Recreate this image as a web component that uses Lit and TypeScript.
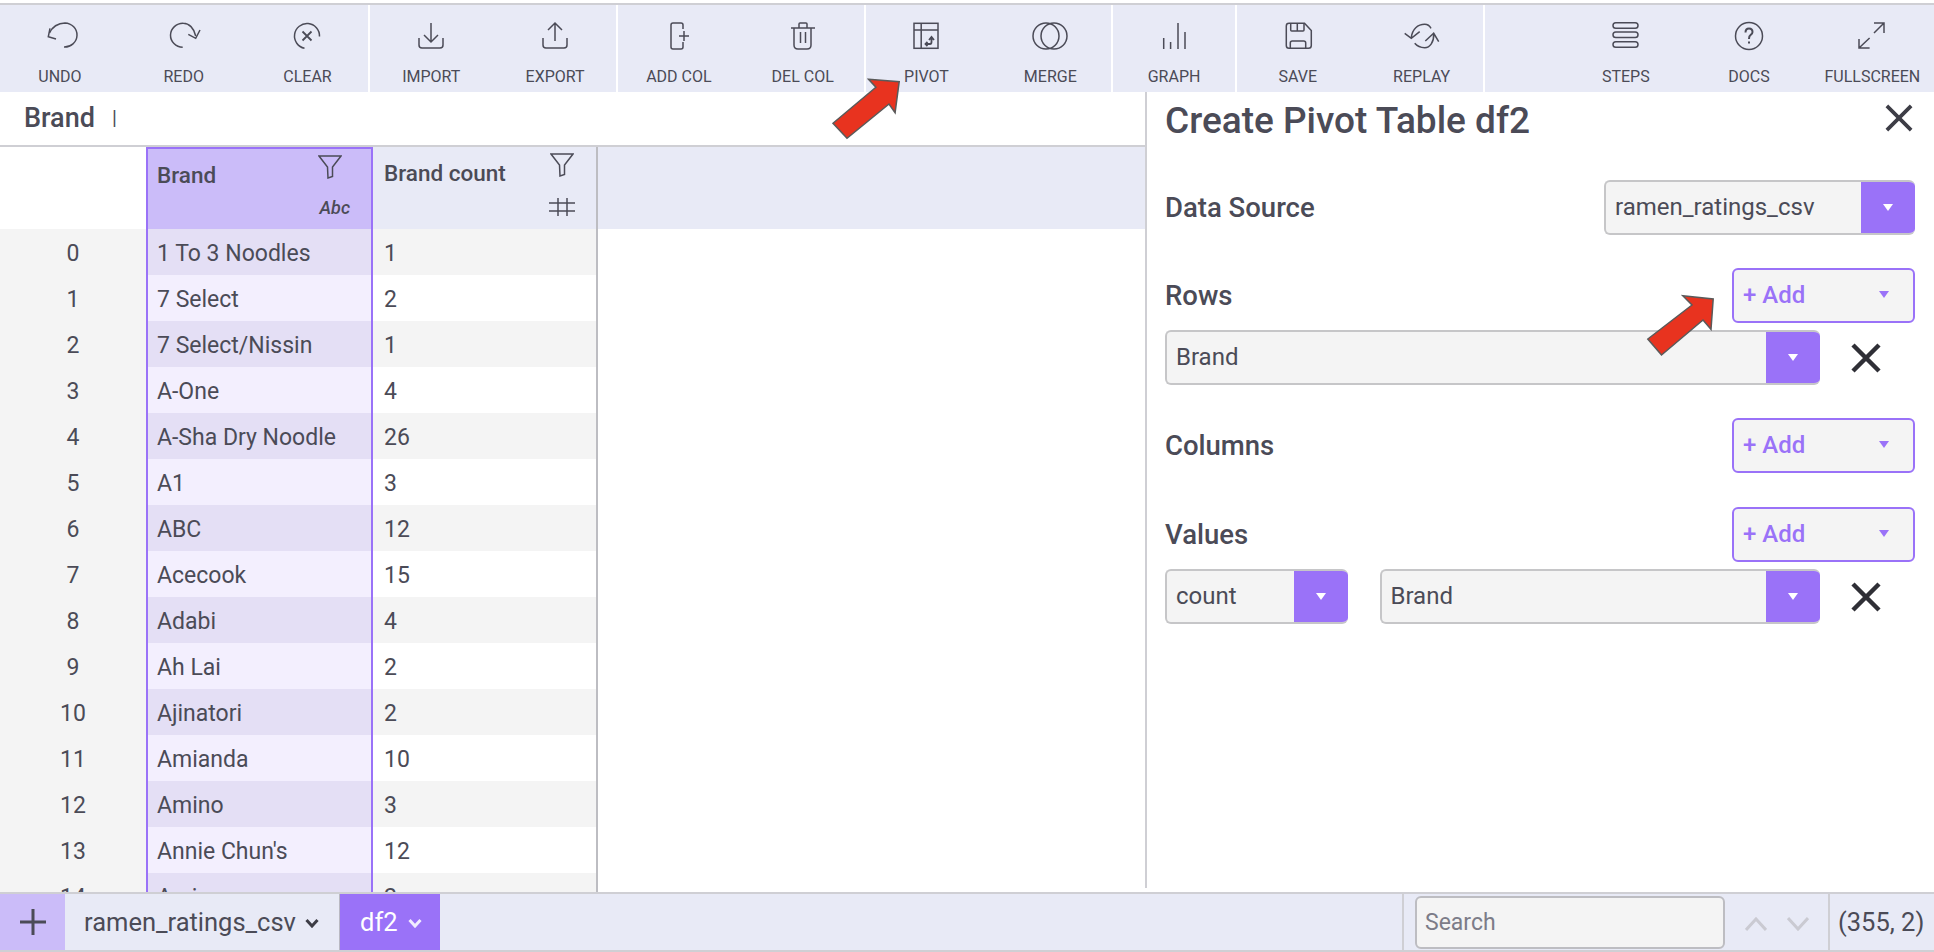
import { LitElement, html, css, svg } from 'lit';
import { customElement } from 'lit/decorators.js';

const icons: Record<string, unknown> = {
  undo: svg`<path d="M7.500 15C10 9 16 5 23 5A12.500 12 0 0 1 22 29"/><path d="M8 10.300L6.300 18.700L14 21"/>`,
  redo: svg`<path d="M16.700 29.300A12.500 12 0 0 1 17.300 5.300C23 5.300 28 10 29.700 18"/><path d="M22.300 16.300L29.700 20.300L34 12"/>`,
  clear: svg`<path d="M15.500 30.300A12.500 12.500 0 1 1 30.500 18.500"/><path d="M13.500 13.500L22.500 22.500M22.500 13.500L13.500 22.500" stroke-width="1.800"/>`,
  import: svg`<path d="M18 5V24M11 17L18 24L25 17"/><path d="M6 20V27Q6 30 9 30H27Q30 30 30 27V20"/>`,
  export: svg`<path d="M18 5V23M11 12L18 5L25 12"/><path d="M6 20V27Q6 30 9 30H27Q30 30 30 27V20"/>`,
  addcol: svg`<path d="M22 11V7Q22 5 20 5H12Q10 5 10 7V29Q10 31 12 31H20Q22 31 22 29V24"/><path d="M23 13V23M18 18H28"/>`,
  delcol: svg`<path d="M6 10H30M14 10V6Q14 5 15 5H21Q22 5 22 6V10"/><path d="M9 10V27Q9 31 13 31H22Q26 31 26 27V10M15.500 14V25M20.500 14V25"/>`,
  pivot: svg`<rect x="6" y="5.300" width="24" height="25"/><path d="M6 12H30M13.200 5.300V30.300"/><path d="M17.500 26H22Q23.500 26 23.500 24V20M21 22L23.500 19L26 22M19.500 24L17.500 26L19.500 28" stroke-width="1.800"/>`,
  merge: svg`<circle cx="14" cy="18" r="13"/><circle cx="22" cy="18" r="13"/>`,
  graph: svg`<path d="M7.700 20V31M14.600 24V31M22 5V31M29 14V31"/>`,
  save: svg`<path d="M6.300 8Q6.300 5.300 9 5.300H24.500L31.300 12.500V27.500Q31.300 30.300 28.500 30.300H9Q6.300 30.300 6.300 27.500Z"/><path d="M10.700 5.300V12Q10.700 13 11.700 13H23Q24 13 24 12V5.300M17.300 5.300V13M10.300 30.300V25Q10.300 23 12.300 23H23.700Q25.700 23 25.700 25V30.300"/>`,
  replay: svg`<path d="M7.300 20C8 11 14 6.300 20.700 6.300C23 6.300 25.500 7.500 27 10.300M0.700 15.300L7.300 20.300L15.700 13.700"/><path d="M29.700 16C30 24 26 29.700 20.700 29.700C17 29.700 13 28 10.700 25.300M21.300 23L29.700 15.300L34.700 23.700"/>`,
  steps: svg`<rect x="5" y="4.700" width="25" height="5.500" rx="2.750"/><rect x="5" y="14" width="25" height="5.500" rx="2.750"/><rect x="5" y="23.700" width="25" height="5.500" rx="2.750"/>`,
  docs: svg`<circle cx="18" cy="18" r="13.500"/><path d="M14.500 14.500Q14.500 10.500 18 10.500Q21.500 10.500 21.500 14Q21.500 16 19.500 17Q18 18 18 21M18 23.500V25.500" stroke-width="2"/>`,
  fullscreen: svg`<path d="M30 5L20 15M20 5H30V15M5 30L15.600 20M5 21V30H15.600"/>`,
};

const toolGroups = [
  { tools: [['UNDO', 'undo'], ['REDO', 'redo'], ['CLEAR', 'clear']] },
  { tools: [['IMPORT', 'import'], ['EXPORT', 'export']] },
  { tools: [['ADD COL', 'addcol'], ['DEL COL', 'delcol']] },
  { tools: [['PIVOT', 'pivot'], ['MERGE', 'merge']] },
  { tools: [['GRAPH', 'graph']] },
  { tools: [['SAVE', 'save'], ['REPLAY', 'replay']] },
];
const rightTools = [['STEPS', 'steps'], ['DOCS', 'docs'], ['FULLSCREEN', 'fullscreen']];

const rows: [string, string][] = [
  ['1 To 3 Noodles', '1'],
  ['7 Select', '2'],
  ['7 Select/Nissin', '1'],
  ['A-One', '4'],
  ['A-Sha Dry Noodle', '26'],
  ['A1', '3'],
  ['ABC', '12'],
  ['Acecook', '15'],
  ['Adabi', '4'],
  ['Ah Lai', '2'],
  ['Ajinatori', '2'],
  ['Amianda', '10'],
  ['Amino', '3'],
  ["Annie Chun's", '12'],
  ['Arai', '2'],
];

const funnel = html`<svg class="funnel" viewBox="0 0 24 24"><path d="M1 1H23L14.500 12V21.500L10 23L9.500 12Z"/></svg>`;
const cross = (cls: string) => html`<svg class=${cls} viewBox="0 0 30 30"><path d="M2 2L28 28M28 2L2 28"/></svg>`;

@customElement('app-root')
export class AppRoot extends LitElement {
  static styles = css`
    :host {
      display: block;
      height: 952px;
      overflow: hidden;
      background: #fff;
      font-family: Roboto, "Liberation Sans", sans-serif;
      color: #4b4b57;
    }

    .app {
      display: flex;
      flex-direction: column;
      height: 952px;
      padding-top: 3px;
      box-sizing: border-box;
      position: relative;
    }

    .toolbar {
      display: flex;
      flex: none;
      height: 87px;
      margin-left: -2px;
      border-top: 2px solid #cfcfd4;
      background: #e8eaf6;
    }
    .group {
      display: flex;
      box-shadow: 1px 0 0 #fff, inset -1px 0 0 #fff;
    }
    .right {
      margin-left: auto;
      box-shadow: none;
    }
    .tool {
      width: 123.800px;
      display: flex;
      flex-direction: column;
      align-items: center;
      padding-top: 13px;
      box-sizing: border-box;
    }
    .right .tool {
      width: 123.300px;
    }
    .tool svg {
      width: 36px;
      height: 36px;
      fill: none;
      stroke: #4b4b57;
      stroke-width: 1.500;
      overflow: visible;
    }
    .tool span {
      margin-top: 13px;
      font-size: 16px;
      line-height: 20px;
    }

    .main {
      display: flex;
      flex: none;
      height: 800px;
    }
    .left {
      width: 1145px;
      flex: none;
      display: flex;
      flex-direction: column;
      overflow: hidden;
    }
    .formula {
      flex: none;
      height: 51px;
      padding: 0 0 2px 24px;
      border-bottom: 2px solid #cfcfd4;
      display: flex;
      align-items: center;
      font-size: 27px;
      font-weight: 500;
    }
    .caret {
      margin-left: 17px;
      font-size: 20px;
      font-weight: 400;
    }

    .table {
      display: grid;
      grid-template-columns: 146px 227px 225px 1fr;
      grid-auto-rows: 46px;
      grid-template-rows: 82px;
      flex: 1;
      overflow: hidden;
      font-size: 23px;
    }
    .corner {
      background: #fff;
    }
    .head {
      background: #e8eaf6;
      box-sizing: border-box;
      position: relative;
      padding: 13px 0 0 9px;
      font-size: 22.500px;
      font-weight: 500;
    }
    .head.sel {
      background: #cbbcf9;
      border: solid #9a72f8;
      border-width: 2px 2px 0;
    }
    .head.count {
      border-right: 2px solid #bdbdc2;
      padding-left: 11px;
      padding-top: 13px;
    }
    .head.rest {
      grid-column: 4;
    }
    .head-tools {
      position: absolute;
      right: 22px;
      top: 6px;
      display: flex;
      flex-direction: column;
      align-items: flex-end;
    }
    .head.sel .head-tools {
      right: 29px;
    }
    .funnel {
      width: 24px;
      height: 24px;
      fill: none;
      stroke: #4b4b57;
      stroke-width: 1.500;
    }
    .abc {
      margin-top: 18px;
      font-size: 18px;
      font-style: italic;
      font-weight: 500;
      margin-right: -8px;
    }
    .hash {
      width: 26px;
      height: 18px;
      margin: 21px -1px 0 0;
      fill: none;
      stroke: #4b4b57;
      stroke-width: 1.500;
    }

    .cell {
      display: flex;
      align-items: center;
      box-sizing: border-box;
      padding-top: 2px;
    }
    .cell.idx {
      background: #f4f4f4;
      justify-content: center;
    }
    .cell.brand {
      border: solid #9a72f8;
      border-width: 0 2px;
      padding-left: 9px;
      background: #f3effe;
    }
    .cell.brand.even {
      background: #e4dff5;
    }
    .cell.num {
      padding-left: 11px;
      border-right: 2px solid #bdbdc2;
      background: #fff;
    }
    .cell.num.even {
      background: #f4f4f4;
    }
    .cell.blank {
      background: #fff;
    }

    .panel {
      flex: 1;
      height: 796px;
      border-left: 2px solid #cfcfd4;
      padding: 0 19px 0 18px;
      box-sizing: border-box;
    }
    .title-row {
      height: 56px;
      display: flex;
      align-items: center;
      justify-content: space-between;
    }
    .title-row h1 {
      margin: 0;
      font-size: 37px;
      font-weight: 500;
    }
    .close {
      width: 28px;
      height: 28px;
      margin: -4px 2px 0 0;
      fill: none;
      stroke: #3d3d46;
      stroke-width: 4;
    }
    .head-row {
      display: flex;
      align-items: center;
      justify-content: space-between;
      height: 55px;
      margin-top: 33px;
      font-size: 27.500px;
      font-weight: 500;
    }
    .head-row.first {
      margin-top: 32px;
    }
    .head-row.values {
      margin-top: 34px;
    }
    .pick-row {
      display: flex;
      align-items: center;
      margin-top: 7px;
      gap: 32px;
    }
    .select {
      display: flex;
      height: 55px;
      box-sizing: border-box;
      border: 2px solid #c6c6c8;
      border-right: 0;
      border-radius: 6px;
      background: #f4f4f4;
      font-size: 24px;
      font-weight: 400;
      overflow: hidden;
    }
    .select .val {
      flex: 1;
      display: flex;
      align-items: center;
      padding: 0 0 1px 9px;
    }
    .select .drop {
      width: 54px;
      margin-top: -2px;
      margin-bottom: -2px;
      background: #9a72f8;
      display: flex;
      align-items: center;
      justify-content: center;
    }
    .tri {
      width: 0;
      height: 0;
      border: solid transparent;
      border-width: 7px 5.500px 0;
      border-top-color: #fff;
    }
    .source {
      width: 311px;
    }
    .wide {
      width: 654.500px;
    }
    .fn {
      width: 182.500px;
    }
    .col {
      width: 440px;
    }
    .remove {
      width: 30px;
      height: 30px;
      margin-left: -1px;
      fill: none;
      stroke: #2f2f36;
      stroke-width: 4.500;
    }
    .add {
      width: 183px;
      height: 55px;
      box-sizing: border-box;
      border: 2px solid #9a72f8;
      border-radius: 6px;
      background: #f4f4f4;
      color: #9a72f8;
      display: flex;
      align-items: center;
      justify-content: space-between;
      padding: 0 24px 2px 9px;
      font-size: 24px;
      font-weight: 500;
    }
    .add .tri {
      border-top-color: #9a72f8;
    }

    .bottom {
      flex: none;
      height: 60px;
      box-sizing: border-box;
      border-top: 2px solid #cfcfd4;
      border-bottom: 2px solid #cfcfd4;
      background: #e8eaf6;
      display: flex;
      align-items: stretch;
      font-size: 25.500px;
    }
    .plus {
      width: 65px;
      background: #cbbcf9;
      display: flex;
      align-items: center;
      justify-content: center;
    }
    .plus svg {
      width: 26px;
      height: 26px;
      stroke: #4b4b57;
      stroke-width: 3;
    }
    .tab {
      display: flex;
      align-items: center;
      box-sizing: border-box;
      width: 275px;
      padding-left: 19px;
      gap: 9px;
      border-right: 1px solid #b9b9c2;
    }
    .tab.active {
      width: 100px;
      padding-left: 20px;
      gap: 10px;
      border: 0;
      background: #9a72f8;
      color: #fff;
    }
    .tab svg {
      width: 14px;
      height: 10px;
      margin-top: 2px;
      fill: none;
      stroke: #3d3d46;
      stroke-width: 3;
    }
    .tab.active svg {
      stroke: #f1ecff;
    }
    .find {
      margin-left: auto;
      width: 426px;
      box-sizing: border-box;
      border-left: 2px solid #cfcfd4;
      padding: 1px 0 0 11px;
      display: flex;
      align-items: flex-start;
    }
    .find input {
      width: 310px;
      height: 53px;
      margin: 1px 0 0;
      padding: 0 0 0 8px;
      box-sizing: border-box;
      border: 2px solid #bdbdc2;
      border-radius: 6px;
      background: #f4f4f4;
      font: 400 23px Roboto, sans-serif;
      outline: none;
    }
    .find input::placeholder {
      color: #7c7c88;
    }
    .find .nav {
      width: 22px;
      height: 14px;
      margin: 22px 0 0 20px;
      fill: none;
      stroke: #cacad2;
      stroke-width: 3;
      flex: none;
    }
    .shape {
      width: 106px;
      flex: none;
      box-sizing: border-box;
      border-left: 2px solid #cfcfd4;
      display: flex;
      align-items: center;
      padding-left: 8px;
      white-space: nowrap;
    }

    .arrows {
      position: absolute;
      left: 0;
      top: 0;
      width: 1934px;
      height: 952px;
      pointer-events: none;
      fill: #e8331f;
      stroke: #5a5a5a;
      stroke-width: 1.500;
    }
  `;

  renderTool(tool: string[]) {
    return html`<div class="tool">
      <svg viewBox="0 0 36 36">${icons[tool[1]]}</svg>
      <span>${tool[0]}</span>
    </div>`;
  }

  renderSelect(value: string, cls: string) {
    return html`<div class="select ${cls}">
      <div class="val">${value}</div>
      <div class="drop"><div class="tri"></div></div>
    </div>`;
  }

  renderAdd() {
    return html`<div class="add"><span>+ Add</span><div class="tri"></div></div>`;
  }

  render() {
    return html`
      <div class="app">
        <div class="toolbar">
          ${toolGroups.map((g) => html`<div class="group">${g.tools.map((t) => this.renderTool(t))}</div>`)}
          <div class="group right">${rightTools.map((t) => this.renderTool(t))}</div>
        </div>

        <div class="main">
          <div class="left">
            <div class="formula">Brand<span class="caret">|</span></div>
            <div class="table">
              <div class="corner"></div>
              <div class="head sel">
                Brand
                <div class="head-tools">${funnel}<span class="abc">Abc</span></div>
              </div>
              <div class="head count">
                Brand count
                <div class="head-tools">
                  ${funnel}
                  <svg class="hash" viewBox="0 0 26 18"><path d="M0 5H26M0 13H26M9 0V18M18 0V18"/></svg>
                </div>
              </div>
              <div class="head rest"></div>
              ${rows.map(
                (r, i) => html`
                  <div class="cell idx">${i}</div>
                  <div class="cell brand ${i % 2 ? '' : 'even'}">${r[0]}</div>
                  <div class="cell num ${i % 2 ? '' : 'even'}">${r[1]}</div>
                  <div class="cell blank"></div>
                `
              )}
            </div>
          </div>

          <div class="panel">
            <div class="title-row">
              <h1>Create Pivot Table df2</h1>
              ${cross('close')}
            </div>
            <div class="head-row first">
              <span>Data Source</span>
              ${this.renderSelect('ramen_ratings_csv', 'source')}
            </div>
            <div class="head-row"><span>Rows</span>${this.renderAdd()}</div>
            <div class="pick-row">${this.renderSelect('Brand', 'wide')}${cross('remove')}</div>
            <div class="head-row"><span>Columns</span>${this.renderAdd()}</div>
            <div class="head-row values"><span>Values</span>${this.renderAdd()}</div>
            <div class="pick-row">
              ${this.renderSelect('count', 'fn')}${this.renderSelect('Brand', 'col')}${cross('remove')}
            </div>
          </div>
        </div>

        <div class="bottom">
          <div class="plus"><svg viewBox="0 0 26 26"><path d="M13 0V26M0 13H26"/></svg></div>
          <div class="tab">ramen_ratings_csv<svg viewBox="0 0 14 10"><path d="M1.500 2L7 8L12.500 2"/></svg></div>
          <div class="tab active">df2<svg viewBox="0 0 14 10"><path d="M1.500 2L7 8L12.500 2"/></svg></div>
          <div class="find">
            <input placeholder="Search" />
            <svg class="nav" viewBox="0 0 22 14"><path d="M1 13L11 2L21 13"/></svg>
            <svg class="nav" viewBox="0 0 22 14"><path d="M1 1L11 12L21 1"/></svg>
          </div>
          <div class="shape">(355, 2)</div>
        </div>

        <svg class="arrows" viewBox="0 0 1934 952">
          <polygon points="868.600,79.300 899.200,81.700 895.100,112.700 889,104 847,138.300 833,123.300 875.900,87.300"/>
          <polygon points="1682.800,295.700 1713.200,299 1711,329.300 1703,320 1661.500,355 1647.800,339 1692,305"/>
        </svg>
      </div>
    `;
  }
}
